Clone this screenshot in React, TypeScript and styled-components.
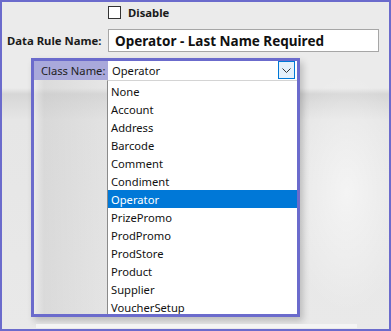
import styled, { createGlobalStyle } from "styled-components";

const GlobalStyle = createGlobalStyle`
  html, body {
    margin: 0;
    padding: 0;
  }
  body {
    font-family: "Noto Sans", "Liberation Sans", sans-serif;
    color: #1a1a1a;
  }
`;

const Frame = styled.div`
  width: 391px;
  height: 331px;
  box-sizing: border-box;
  border: 2px solid #6b6bcc;
  overflow: hidden;
  display: flex;
  flex-direction: column;
  background:
    radial-gradient(ellipse 60px 120px at 345px 190px, rgba(255,255,255,0.55), rgba(255,255,255,0) 100%),
    linear-gradient(180deg, #ebebeb 0, #ebebeb 86px, #d6d6d6 92px, #e6e6e6 118px, #e9e9e9 100%);
`;

const FormGrid = styled.div`
  display: grid;
  grid-template-columns: 106px 271px;
  grid-template-rows: 21px 23px;
  row-gap: 6px;
`;

const FieldLabel = styled.label`
  display: flex;
  align-items: center;
  padding-left: 5px;
  font-size: 11.3px;
  font-weight: bold;
  white-space: nowrap;
`;

const CheckRow = styled.div`
  grid-column: 2;
  display: flex;
  align-items: center;
  gap: 7px;
  font-size: 11.3px;
  font-weight: bold;
`;

const CheckBox = styled.span`
  width: 13px;
  height: 13px;
  box-sizing: border-box;
  border: 1px solid #333;
  background: #fff;
`;

const NameInput = styled.div`
  box-sizing: border-box;
  border: 1px solid #a6a6a6;
  background: #fff;
  display: flex;
  align-items: center;
  padding-left: 6px;
  font-size: 13.5px;
  font-weight: bold;
  color: #111;
  white-space: nowrap;
`;

const Panel = styled.div`
  margin: 6px 0 0 29px;
  width: 269px;
  height: 259px;
  box-sizing: border-box;
  border: 3px solid #6b6bcc;
  box-shadow: 3px 4px 7px rgba(0, 0, 0, 0.2);
  display: flex;
  flex-direction: column;
  overflow: hidden;
`;

const Header = styled.div`
  display: flex;
  height: 19px;
  flex-shrink: 0;
`;

const ClassLabel = styled.div`
  width: 74px;
  box-sizing: border-box;
  padding-left: 7px;
  background: #a9a9db;
  display: flex;
  align-items: center;
  font-size: 11.2px;
  color: #222;
  white-space: nowrap;
`;

const Combo = styled.div`
  flex: 1;
  background: #fff;
  display: flex;
  padding-left: 4px;
  font-size: 11.2px;
  color: #111;
`;

const ComboText = styled.span`
  flex: 1;
  display: flex;
  align-items: center;
`;

const DropButton = styled.div`
  width: 17px;
  height: 18px;
  margin-right: 2px;
  box-sizing: border-box;
  border: 1px solid #0078d7;
  background: #e5f1fb;
  display: flex;
  align-items: center;
  justify-content: center;
`;

const Body = styled.div`
  flex: 1;
  display: flex;
  min-height: 0;
`;

const Side = styled.div`
  width: 73px;
  background: linear-gradient(90deg, rgba(235,235,235,0.6) 0, rgba(200,200,200,0.45) 10px, rgba(215,215,215,0.25) 100%);
`;

const List = styled.ul`
  flex: 1;
  margin: 0;
  padding: 1px 0 0;
  list-style: none;
  background: #fff;
  border-left: 1px solid #8a8a8a;
  border-top: 1px solid #d4d4d4;
  overflow: hidden;
`;

const Item = styled.li<{ $selected?: boolean }>`
  height: 18px;
  line-height: 19px;
  padding-left: 3px;
  font-size: 11.2px;
  white-space: nowrap;
  background: ${p => (p.$selected ? "#0078d7" : "transparent")};
  color: ${p => (p.$selected ? "#fff" : "#111")};
`;

const FootStrip = styled.div`
  margin: 7px 0 0 34px;
  width: 321px;
  height: 4px;
  background: #f4f4f4;
`;

const classes = [
  "None",
  "Account",
  "Address",
  "Barcode",
  "Comment",
  "Condiment",
  "Operator",
  "PrizePromo",
  "ProdPromo",
  "ProdStore",
  "Product",
  "Supplier",
  "VoucherSetup",
];

export default function App() {
  return (
    <>
      <GlobalStyle />
      <Frame>
        <FormGrid>
          <CheckRow>
            <CheckBox />
            <span>Disable</span>
          </CheckRow>
          <FieldLabel>Data Rule Name:</FieldLabel>
          <NameInput>Operator - Last Name Required</NameInput>
        </FormGrid>
        <Panel>
          <Header>
            <ClassLabel>Class Name:</ClassLabel>
            <Combo>
              <ComboText>Operator</ComboText>
              <DropButton>
                <svg width="9" height="5" viewBox="0 0 9 5">
                  <polyline points="0.5,0.5 4.5,4.5 8.5,0.5" fill="none" stroke="#333" strokeWidth="1" />
                </svg>
              </DropButton>
            </Combo>
          </Header>
          <Body>
            <Side />
            <List>
              {classes.map(c => (
                <Item key={c} $selected={c === "Operator"}>
                  {c}
                </Item>
              ))}
            </List>
          </Body>
        </Panel>
        <FootStrip />
      </Frame>
    </>
  );
}
